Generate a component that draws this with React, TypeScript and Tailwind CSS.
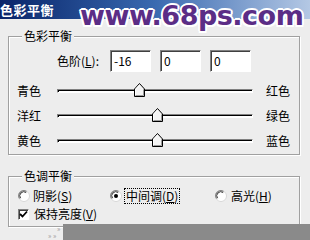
import React from "react";

const font = { fontFamily: '"Noto Sans CJK SC", "DejaVu Sans", sans-serif' };

function Thumb({ left }: { left: number }) {
  return (
    <svg
      width="11"
      height="14"
      viewBox="0 0 11 14"
      className="absolute top-[-7px]"
      style={{ left: left - 5 }}
    >
      <polygon points="0.5,13.5 0.5,6 5.5,0.5 10.5,6 10.5,13.5" fill="#f4f4f4" stroke="#000" />
      <polyline points="1.5,12.5 1.5,6.4 5.5,2" fill="none" stroke="#fff" />
      <polyline points="9.5,6.4 9.5,12.5 1.5,12.5" fill="none" stroke="#9a9a9a" />
    </svg>
  );
}

function SliderRow({ left, right, pos }: { left: string; right: string; pos: number }) {
  return (
    <div className="flex items-center h-[25px]">
      <span className="w-[40px] text-[12px] text-black leading-none">{left}</span>
      <div className="relative w-[196px] h-[4px] border-t border-l border-[#808080] border-b border-r border-b-white border-r-white bg-white shadow-[inset_1px_1px_0_#000]">
        <Thumb left={pos} />
      </div>
      <span className="ml-[13px] text-[12px] text-black leading-none">{right}</span>
    </div>
  );
}

function Radio({ checked }: { checked?: boolean }) {
  return (
    <svg width="12" height="12" viewBox="0 0 12 12">
      <circle cx="6" cy="6" r="5.5" fill="#fff" stroke="#d8d8d8" />
      <path d="M1.6 8.5 A5 5 0 0 1 8.5 1.6" fill="none" stroke="#808080" strokeWidth="1.2" />
      <path d="M2.6 8.2 A4 4 0 0 1 8.2 2.6" fill="none" stroke="#404040" strokeWidth="1" />
      {checked && <circle cx="6" cy="6" r="2" fill="#000" />}
    </svg>
  );
}

function Input({ value }: { value: string }) {
  return (
    <div className="w-[41px] h-[22px] bg-white border border-t-[#808080] border-l-[#808080] border-b-white border-r-white shadow-[inset_1px_1px_0_#404040] flex items-center px-[3px] text-[12px] text-black leading-none">
      {value}
    </div>
  );
}

export default function App() {
  return (
    <div className="w-[310px] h-[240px] bg-[#ededed] relative overflow-hidden" style={font}>
      {/* Title bar */}
      <div className="h-[19px] bg-gradient-to-r from-[#0a246a] via-[#3a6ab0] to-[#b4c8e4] flex items-center">
        <span className="text-white font-bold text-[13px] leading-none tracking-[0.5px]">色彩平衡</span>
      </div>

      {/* Watermark */}
      <div
        className="absolute left-[80px] top-[2px] text-[27px] font-bold text-[#5b2d86] leading-[28px] tracking-[-0.5px]"
        style={{
          fontFamily: '"DejaVu Sans", sans-serif',
          textShadow:
            "2px 0 0 #fff, -2px 0 0 #fff, 0 2px 0 #fff, 0 -2px 0 #fff, 1.5px 1.5px 0 #fff, -1.5px 1.5px 0 #fff, 1.5px -1.5px 0 #fff, -1.5px -1.5px 0 #fff",
        }}
      >
        www.68ps.com
      </div>

      {/* Group 1 */}
      <div className="relative ml-[8px] mt-[17px] w-[292px] h-[119px] border border-[#a0a0a0] shadow-[inset_1px_1px_0_#fff,1px_1px_0_#fff] px-[8px] pt-[13px]">
        <span className="absolute left-[13px] top-[-9px] bg-[#ededed] px-[2px] text-[12px] leading-[16px] text-black">
          色彩平衡
        </span>
        <div className="flex items-center">
          <span className="ml-[40px] w-[53px] text-[12px] text-black leading-none">
            色阶(<span className="underline">L</span>):
          </span>
          <div className="flex gap-[9px]">
            <Input value="-16" />
            <Input value="0" />
            <Input value="0" />
          </div>
        </div>
        <div className="mt-[6px] flex flex-col">
          <SliderRow left="青色" right="红色" pos={81} />
          <SliderRow left="洋红" right="绿色" pos={99} />
          <SliderRow left="黄色" right="蓝色" pos={99} />
        </div>
      </div>

      {/* Group 2 */}
      <div className="relative ml-[8px] mt-[21px] w-[292px] h-[51px] border border-[#a0a0a0] shadow-[inset_1px_1px_0_#fff,1px_1px_0_#fff] px-[9px] pt-[11px]">
        <span className="absolute left-[13px] top-[-9px] bg-[#ededed] px-[2px] text-[12px] leading-[16px] text-black">
          色调平衡
        </span>
        <div className="flex items-center h-[16px] text-[12px] text-black leading-none">
          <div className="flex items-center w-[92px] gap-[3px]">
            <Radio />
            <span>
              阴影(<span className="underline">S</span>)
            </span>
          </div>
          <div className="flex items-center w-[105px] gap-[3px]">
            <Radio checked />
            <span className="outline outline-1 outline-dotted outline-black px-[1px] py-[1px]">
              中间调(<span className="underline">D</span>)
            </span>
          </div>
          <div className="flex items-center gap-[4px]">
            <Radio />
            <span>
              高光(<span className="underline">H</span>)
            </span>
          </div>
        </div>
        <div className="flex items-center gap-[5px] mt-[2px] h-[16px] text-[12px] text-black leading-none">
          <div className="w-[11px] h-[11px] bg-white border border-t-[#808080] border-l-[#808080] border-b-white border-r-white shadow-[inset_1px_1px_0_#404040] flex items-center justify-center">
            <svg width="9" height="9" viewBox="0 0 9 9">
              <path d="M1 4 L3.5 6.5 L8 1.5" fill="none" stroke="#000" strokeWidth="1.8" />
            </svg>
          </div>
          <span>
            保持亮度(<span className="underline">V</span>)
          </span>
        </div>
      </div>

      {/* bottom overlay */}
      <div className="absolute left-[48px] top-[225px] text-[7px] text-[#999] leading-[7px]">
        <div className="ml-[9px]">»</div>
        <div>» »</div>
      </div>
      <div className="absolute left-[63px] top-[224px] w-[247px] h-[16px] bg-[#8a8a8a]" />
    </div>
  );
}
